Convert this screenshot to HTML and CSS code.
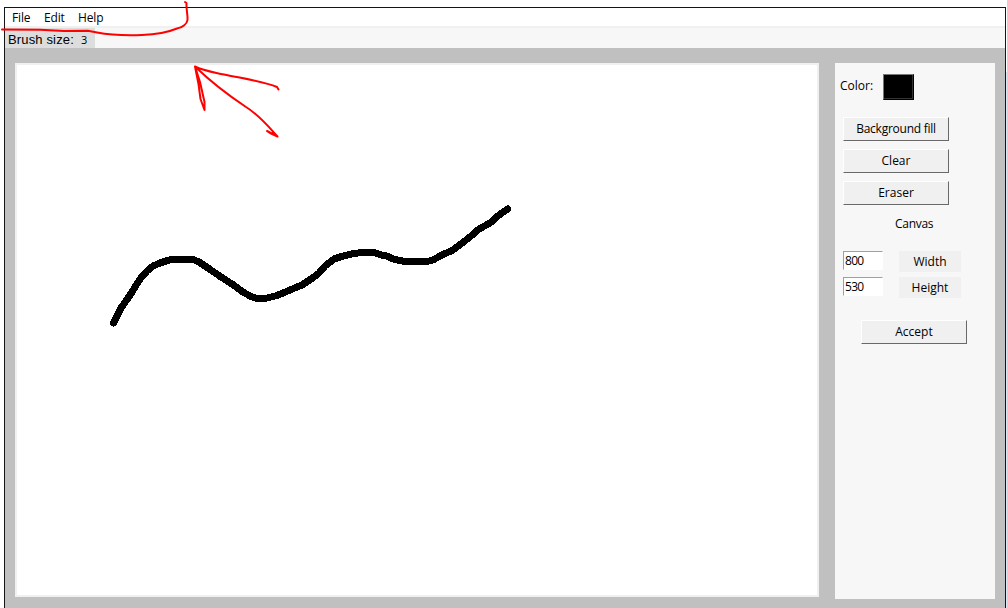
FILE: index.html
```html
<!DOCTYPE html>
<html lang="en">
<head>
<meta charset="utf-8">
<title>Paint</title>
<link rel="stylesheet" href="styles.css">
</head>
<body>
<div class="window">
  <nav class="menu"><span class="menu-file">File</span><span class="menu-edit">Edit</span><span class="menu-help">Help</span></nav>
  <div class="toolbar"><div class="brush"><span class="brush-label">Brush size:</span><span class="brush-value">3</span></div></div>
  <main class="workspace">
    <div class="canvas">
      <svg class="drawing" width="800" height="530" viewBox="17 65 800 530">
        <path shape-rendering="crispEdges" d="M113.500 323L117 316L121 308L128 298L132 292L140 279L147 271L153 266L160 263L169 260L178 259.500H193L199 262L208 268L221 277L232 284L243 292L250 296L257 298.500L267 298L277 295.500L290 290L302 285L314 277L319 273L325 266L334 259L343 256L354 253.500L362 252.500H374L381 255L387 256L393 259L405 261.500H427L433 260L442 255L453 250L461 244L471 236L479 229L490 223L499 215L507.500 209"/>
      </svg>
    </div>
    <aside class="panel">
      <div class="color-row"><span class="color-label">Color:</span><span class="swatch"></span></div>
      <div class="actions">
        <button class="button button-long">Background fill</button>
        <button class="button">Clear</button>
        <button class="button">Eraser</button>
      </div>
      <div class="heading">Canvas</div>
      <div class="sizes">
        <input class="field" value="800" aria-label="Width"><span class="size-label">Width</span>
        <input class="field" value="530" aria-label="Height"><span class="size-label">Height</span>
      </div>
      <button class="button accept">Accept</button>
    </aside>
  </main>
</div>
<div class="edge"></div>
<svg class="marks" width="1007" height="608" viewBox="0 0 1007 608">
  <path d="M2 29.500L40 29.700L64 31L88 30.700L97 32.500C110 35 128 35.500 142 35C160 34.300 171 31 177 28.500C182 28 187 24 187.500 20C188 15 186 10 186.500 3L185 2"/>
  <path d="M278.500 89.500L277 87C262 81 240 78 224 74.500C213 72 204 71 195 66.500L198.500 84L200.500 99L204.500 110L204.500 102L200 82L195 66.500C211 82 228 95 246 107C259 115 268 126 277.500 136.500L267 131L270 133L277.500 136.500L273 132"/>
</svg>
</body>
</html>
```
FILE: styles.css
```css
* { box-sizing: border-box; }
body { margin: 0; width: 1007px; height: 608px; overflow: hidden; display: flex; padding: 7px 0 0 4px; background: #fff; color: #000; font: 12px/16px "Open Sans", sans-serif; }
.window { width: 1002px; height: 601px; flex: none; display: flex; flex-direction: column; border: 1px solid #151515; border-bottom: 0; }
.menu { height: 20px; flex: none; display: flex; padding: 2px 0 0 7px; border-bottom: 2px solid #f0f0f0; letter-spacing: -.15px; }
.menu-file { width: 32px; }
.menu-edit { width: 34px; }
.toolbar { height: 20px; flex: none; background: #f7f7f7; }
.brush { width: 90px; height: 20px; display: flex; padding: 4px 0 0 3px; background: #ddd; }
.brush-label { width: 73px; font: 13px/15px "Liberation Sans", sans-serif; letter-spacing: .15px; }
.brush-value { line-height: 15px; font-size: 11px; }
.workspace { flex: 1; display: flex; align-items: flex-start; gap: 16px; padding: 15px 10px 0; background: #c0c0c0; }
.canvas { width: 804px; height: 534px; flex: none; border: 2px solid #f0f0f0; background: #fff; }
.drawing { display: block; fill: none; stroke: #000; stroke-width: 7; stroke-linecap: round; stroke-linejoin: round; }
.panel { width: 160px; height: 536px; flex: none; padding: 11px 8px 0; background: #f7f7f7; }
.color-row { display: flex; height: 43px; margin-left: -3px; }
.color-label { width: 43px; padding-top: 4px; }
.swatch { width: 31px; height: 26px; background: #000; border: 1px solid; border-color: #777 #000 #000 #777; box-shadow: inset -1px -1px #333; }
.actions { display: grid; gap: 8px; }
.button { display: block; width: 106px; height: 24px; padding: 0 0 1px; background: #f0f0f0; border: 1px solid; border-color: #fff #696969 #696969 #fff; border-radius: 0; font: inherit; color: #000; }
.button-long { letter-spacing: -.25px; }
.heading { margin-top: 11px; padding-left: 52px; letter-spacing: -.3px; }
.sizes { display: grid; grid-template-columns: 40px 62px; gap: 5px 16px; margin-top: 19px; }
.field { width: 40px; height: 19px; padding: 0 0 0 1px; background: #fff; border: 1px solid; border-color: #a0a0a0 #fff #fff #a0a0a0; font: inherit; letter-spacing: -.7px; outline: 0; }
.size-label { height: 21px; line-height: 21px; text-align: center; background: #f0f0f0; }
.accept { margin: 22px 0 0 18px; }
.edge { width: 1px; height: 536px; margin-top: 65px; background: #dce3f0; }
.marks { position: absolute; left: 0; top: 0; fill: none; stroke: #f00; stroke-width: 2; stroke-linecap: round; stroke-linejoin: round; pointer-events: none; }
```
